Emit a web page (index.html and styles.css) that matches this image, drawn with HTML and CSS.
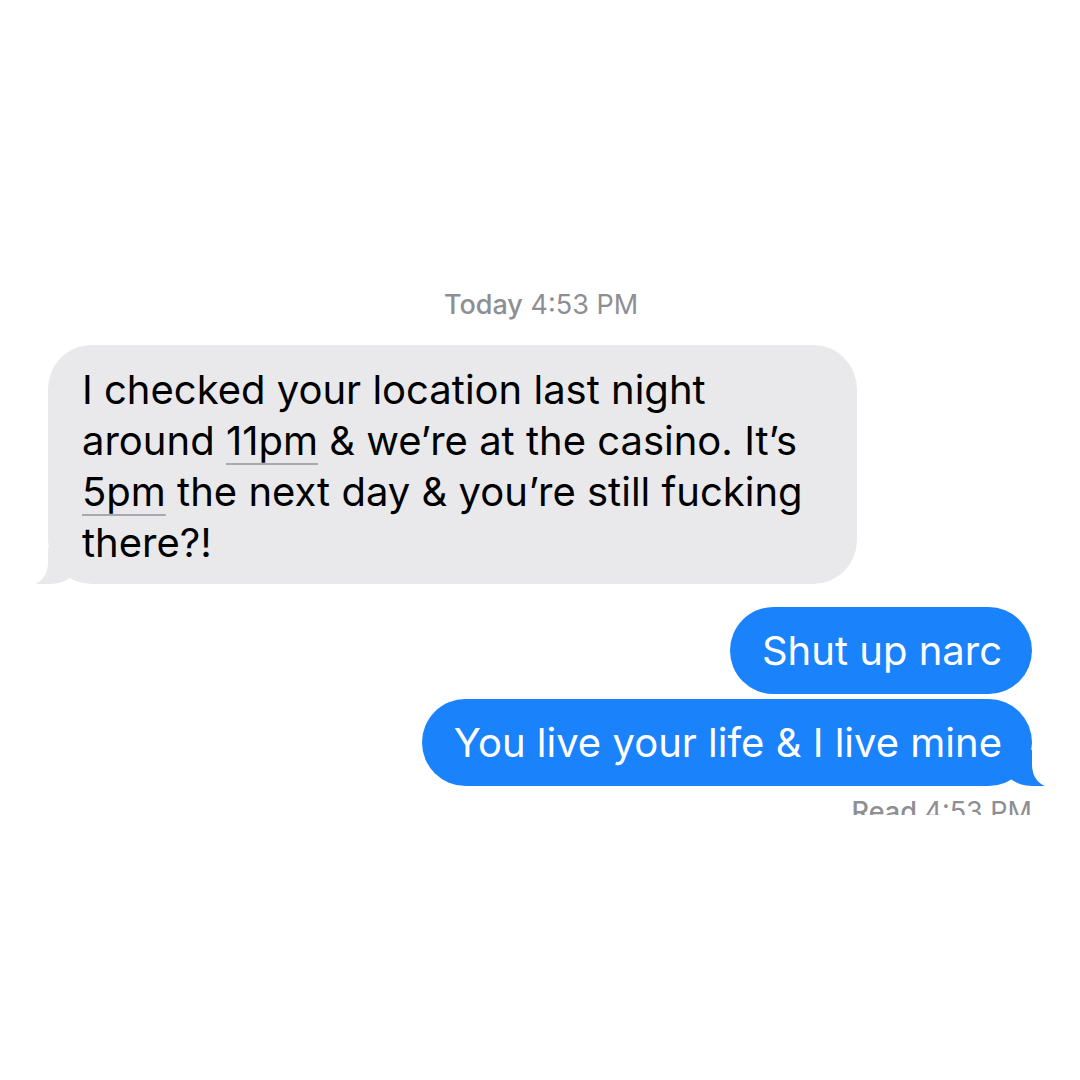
FILE: index.html
```html
<!DOCTYPE html>
<html>
<head>
<meta charset="utf-8">
<link rel="stylesheet" href="styles.css">
</head>
<body>
<div class="screen">
  <div class="thread">
    <div class="stamp"><span class="stamp-day">Today</span> 4:53 PM</div>
    <div class="row row-in">
      <div class="bubble in tail">I checked your location last night around <span class="link">11pm</span> &amp; we’re at the casino. It’s <span class="link">5pm</span> the next day &amp; you’re still fucking there?!</div>
    </div>
    <div class="row row-out first">
      <div class="bubble out">Shut up narc</div>
    </div>
    <div class="row row-out">
      <div class="bubble out tail">You live your life &amp; I live mine</div>
    </div>
    <div class="read-clip">
      <div class="read"><span class="read-label">Read</span> 4:53 PM</div>
    </div>
  </div>
</div>
</body>
</html>
```

FILE: styles.css
```css
html, body {
  margin: 0;
  padding: 0;
  background: #ffffff;
}
.screen {
  width: 1080px;
  height: 1080px;
  overflow: hidden;
  background: #fff;
  font-family: Inter, "Noto Sans", sans-serif;
}
.thread {
  padding: 288px 48px 0 48px;
  display: flex;
  flex-direction: column;
}
.stamp {
  text-align: center;
  font-size: 27px;
  line-height: 34px;
  color: #8e8e93;
  margin-bottom: 23px;
  padding-left: 2px;
}
.stamp-day {
  font-weight: 500;
}
.row {
  display: flex;
}
.row-in {
  justify-content: flex-start;
}
.row-out {
  justify-content: flex-end;
  margin-top: 5px;
}
.row-out.first {
  margin-top: 23px;
}
.bubble {
  position: relative;
  font-size: 40px;
  line-height: 51px;
  border-radius: 44px;
  box-sizing: border-box;
}
.in {
  background: #e9e9eb;
  color: #000;
  width: 809px;
  padding: 19px 10px 16px 34px;
}
.out {
  background: #1a82fb;
  color: #fff;
  padding: 18px 30px 18px 32px;
}
.link {
  text-decoration: underline;
  text-decoration-color: #a8a8ae;
  text-decoration-thickness: 2px;
  text-underline-offset: 8px;
}
/* tails */
.in.tail::before {
  content: "";
  position: absolute;
  left: -12px;
  bottom: 0;
  width: 44px;
  height: 36px;
  background: #e9e9eb;
  border-bottom-right-radius: 30px 24px;
}
.in.tail::after {
  content: "";
  position: absolute;
  left: -30px;
  bottom: -1px;
  width: 30px;
  height: 40px;
  background: #fff;
  border-bottom-right-radius: 18px 22px;
}
.out.tail::before {
  content: "";
  position: absolute;
  right: -14px;
  bottom: 0;
  width: 44px;
  height: 36px;
  background: #1a82fb;
  border-bottom-left-radius: 30px 24px;
}
.out.tail::after {
  content: "";
  position: absolute;
  right: -32px;
  bottom: -1px;
  width: 32px;
  height: 40px;
  background: #fff;
  border-bottom-left-radius: 18px 22px;
}
.read-clip {
  height: 29px;
  overflow: hidden;
  display: flex;
  justify-content: flex-end;
}
.read {
  font-size: 27px;
  line-height: 34px;
  color: #8e8e93;
  margin-top: 9px;
  padding-right: 0;
}
.read-label {
  font-weight: 500;
}
```
